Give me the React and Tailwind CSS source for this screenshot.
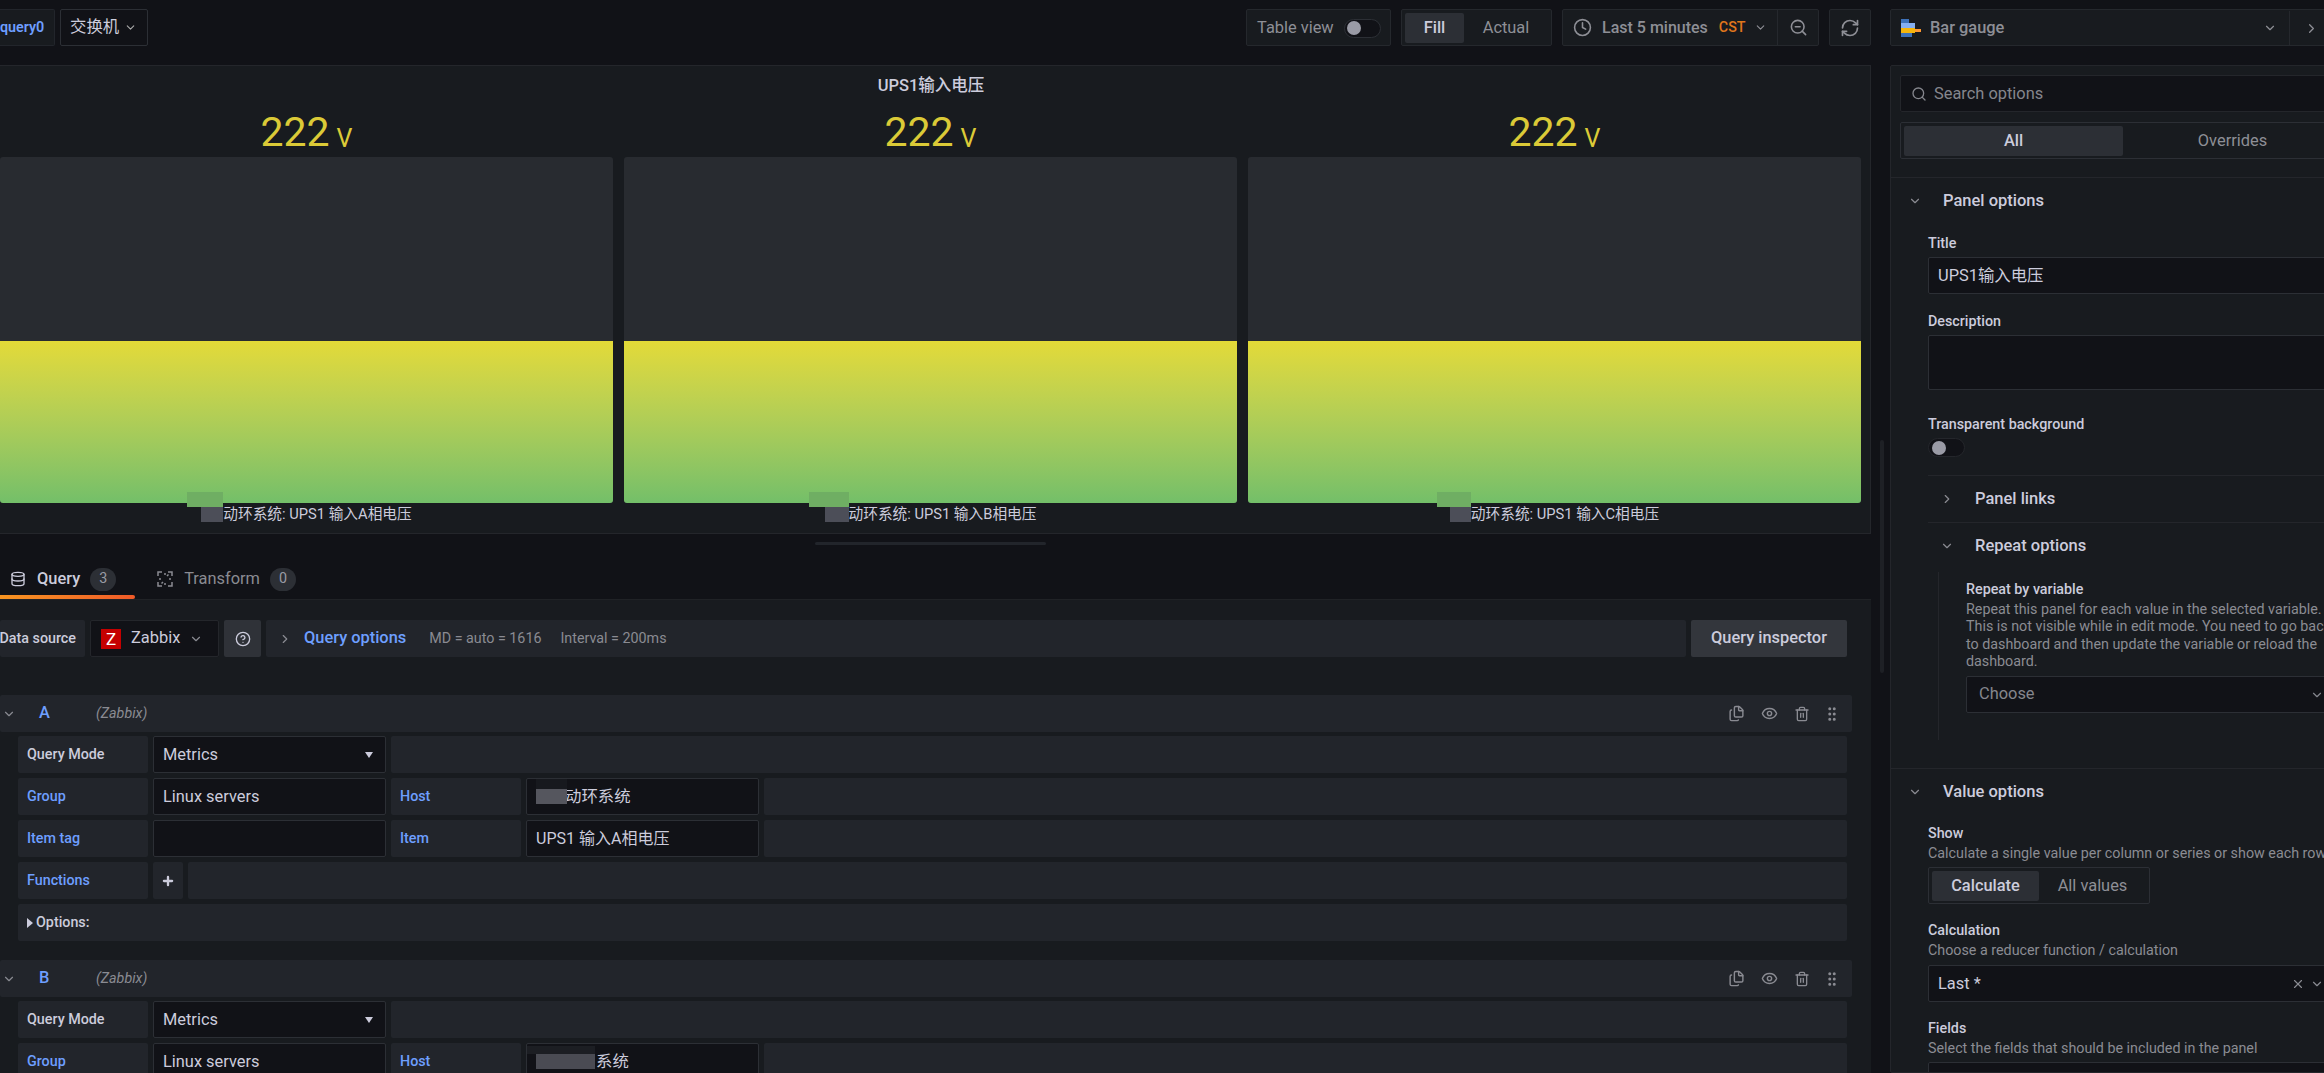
import React from "react";
import {
  ChevronDown,
  ChevronRight,
  CircleHelp,
  Clock,
  Database,
  Eye,
  Files,
  GripVertical,
  Plus,
  RefreshCw,
  Search,
  Trash2,
  X,
  ZoomOut,
} from "lucide-react";

const bars = [
  { name: "A", blockWidth: "w-[22px]", topWidth: "w-[36px]" },
  { name: "B", blockWidth: "w-[24px]", topWidth: "w-[40px]" },
  { name: "C", blockWidth: "w-[21px]", topWidth: "w-[34px]" },
];

const BarGaugeIcon = () => (
  <svg width="20" height="19" viewBox="0 0 20 19" className="shrink-0">
    <rect x="0" y="0" width="8" height="4" fill="#3d71b8" />
    <rect x="0" y="4" width="14" height="5" fill="#84aff1" />
    <rect x="0" y="9" width="14" height="5" fill="#f5b50c" />
    <rect x="14" y="10" width="6" height="3" fill="#ff9830" />
    <rect x="0" y="14" width="11" height="4" fill="#3d71b8" />
  </svg>
);

const TransformIcon = () => (
  <svg width="16" height="16" viewBox="0 0 16 16" fill="none" stroke="#8a8b92" strokeWidth="1.5" className="shrink-0">
    <path d="M1 5V1h4M11 1h4v4M15 11v4h-4M5 15H1v-4" />
    <path d="M7 3h2M3 7v2M13 7v2M7 13h2" />
    <path d="M10 5l1.5-1.5M6 11l-1.5 1.5" />
  </svg>
);

const Caret = () => (
  <svg width="8" height="6" viewBox="0 0 8 6" className="shrink-0">
    <polygon points="0,0 8,0 4,6" fill="#ccccdc" />
  </svg>
);

const GaugeColumn = ({ bar }) => (
  <div className="flex-1 min-w-0 flex flex-col">
    <div className="h-[62px] flex items-end justify-center pb-[6px] text-[#dbca37] leading-none">
      <span className="text-[41px] leading-[38px]">222</span>
      <span className="text-[25px] leading-[24px] ml-[7px]">V</span>
    </div>
    <div className="h-[346px] rounded-[3px] bg-[#282b30] flex flex-col justify-end overflow-hidden">
      <div className="h-[162px] bg-gradient-to-b from-[#e3da37] to-[#73bf69]" />
    </div>
    <div className="h-[22px] flex items-center justify-center text-[14.7px] text-[#ccccdc]">
      <span className={`relative inline-block h-[15px] bg-[#4c4e58] ${bar.blockWidth}`}>
        <span className={`absolute right-0 bottom-full h-[15px] bg-[#6fae63] ${bar.topWidth}`} />
      </span>
      <span>动环系统: UPS1 输入{bar.name}相电压</span>
    </div>
  </div>
);

const Cell = ({ children, className = "" }) => (
  <div className={`h-[37px] rounded-[2px] bg-[#22252b] flex items-center shrink-0 ${className}`}>{children}</div>
);

const RowLabel = ({ children, blue = true }) => (
  <Cell className="w-[130px] pl-[9px]">
    <span className={`text-[14.3px] font-medium ${blue ? "text-[#6e9fff]" : "text-[#ccccdc]"}`}>{children}</span>
  </Cell>
);

const RowInput = ({ children, caret }) => (
  <div className="w-[233px] h-[37px] shrink-0 rounded-[2px] bg-[#111217] border border-[#2c2f35] flex items-center justify-between pl-[9px] pr-[12px] pt-[1px] text-[16.4px] text-[#ccccdc] overflow-hidden">
    <span className="flex items-center">{children}</span>
    {caret && <Caret />}
  </div>
);

const Filler = () => <Cell className="flex-1 min-w-0" />;

const QueryHeader = ({ letter }) => (
  <div className="h-[37px] w-[1852px] bg-[#22252b] rounded-[2px] flex items-center text-[#8a8b92]">
    <ChevronDown size={14} className="ml-[2px]" />
    <span className="w-[27px] ml-[23px] text-[#6e9fff] text-[16.4px] font-medium">{letter}</span>
    <span className="ml-[30px] text-[14.3px] italic">(Zabbix)</span>
    <div className="ml-auto flex items-center gap-[16px] pr-[11px]">
      <Files size={17} />
      <Eye size={17} />
      <Trash2 size={16} />
      <GripVertical size={18} className="ml-[-3px]" />
    </div>
  </div>
);

const QueryBlock = ({ letter, host }) => (
  <div className="flex flex-col">
    <QueryHeader letter={letter} />
    <div className="pl-[18px] pr-[24px] pt-[4px] flex flex-col gap-[5px]">
      <div className="flex gap-[5px]">
        <RowLabel blue={false}>Query Mode</RowLabel>
        <RowInput caret>Metrics</RowInput>
        <Filler />
      </div>
      <div className="flex gap-[5px]">
        <RowLabel>Group</RowLabel>
        <RowInput>Linux servers</RowInput>
        <RowLabel>Host</RowLabel>
        <RowInput>{host}</RowInput>
        <Filler />
      </div>
      <div className="flex gap-[5px]">
        <RowLabel>Item tag</RowLabel>
        <RowInput />
        <RowLabel>Item</RowLabel>
        <RowInput>
          <span className="text-[16px]">UPS1 输入{letter}相电压</span>
        </RowInput>
        <Filler />
      </div>
      <div className="flex gap-[5px]">
        <RowLabel>Functions</RowLabel>
        <Cell className="w-[30px] justify-center">
          <Plus size={14} strokeWidth={4} className="text-[#ccccdc]" />
        </Cell>
        <Filler />
      </div>
      <Cell className="w-full pl-[9px] gap-[3px]">
        <svg width="6" height="10" viewBox="0 0 6 10">
          <polygon points="0,0 6,5 0,10" fill="#ccccdc" />
        </svg>
        <span className="text-[14.3px] font-medium text-[#ccccdc]">Options:</span>
      </Cell>
    </div>
  </div>
);

const HostA = () => (
  <>
    <span className="relative inline-block w-[31px] h-[15px] mr-[-2px] bg-[#55565e]">
      <span className="absolute right-0 bottom-full w-[31px] h-[13px] bg-[#17191e]" />
    </span>
    <span>动环系统</span>
  </>
);

const HostB = () => (
  <>
    <span className="relative inline-block w-[59px] h-[15px] mr-[1px] bg-[#4a4b53]">
      <span className="absolute right-0 bottom-full w-[77px] h-[8px] bg-[#1c1e23]" />
    </span>
    <span>系统</span>
  </>
);

const Field = ({ label, desc, className = "", children }) => (
  <div className={className}>
    <div className="h-[17px] leading-[17px] text-[14.3px] font-medium text-[#ccccdc]">{label}</div>
    {desc && <div className="mt-[3px] leading-[17.4px] text-[14.3px] text-[#8b8c93] whitespace-nowrap">{desc}</div>}
    <div className="mt-[5px]">{children}</div>
  </div>
);

const SelectBox = ({ children, className = "" }) => (
  <div className={`h-[37px] rounded-[2px] bg-[#111217] border border-[#2c2f35] flex items-center pt-[1px] text-[16.4px] ${className}`}>
    {children}
  </div>
);

const SectionHeader = ({ title, open, nested }) => {
  const Icon = open ? ChevronDown : ChevronRight;
  return (
    <div className="h-[46px] flex items-center text-[#ccccdc]">
      <Icon size={14} className={`text-[#8a8b92] ${nested ? "ml-[12px]" : "ml-[17px]"}`} />
      <span className="text-[16.5px] font-medium ml-[21px]">{title}</span>
    </div>
  );
};

const App = () => {
  return (
    <div className="h-screen w-full overflow-hidden flex bg-[#111217] text-[#ccccdc] font-['Roboto','Noto_Sans_CJK_SC',sans-serif]">
      {/* left: preview and queries */}
      <div className="w-[1871px] shrink-0 flex flex-col">
        <div className="h-[65px] shrink-0 pt-[9px] flex items-start">
          <div className="h-[37px] w-[55px] rounded-r-[2px] bg-[#181b1f] border border-[#22252b] border-l-0 flex items-center text-[14.3px] font-semibold text-[#6e9fff]">
            query0
          </div>
          <div className="h-[37px] w-[88px] ml-[5px] rounded-[2px] border border-[#2c2f35] flex items-center pl-[9px] gap-[5px] text-[16.4px]">
            交换机
            <ChevronDown size={13} className="text-[#aaa]" />
          </div>
          <div className="ml-auto flex gap-[10px]">
            <div className="h-[37px] w-[145px] rounded-[2px] bg-[#181b1f] border border-[#25282d] flex items-center pl-[10px] pt-[1px] text-[16.4px] text-[#8e8f96]">
              Table view
              <span className="ml-[10px] w-[37px] h-[19px] rounded-full border border-[#2c2f35] bg-[#111217] flex items-center pl-[2px]">
                <span className="w-[14px] h-[14px] rounded-full bg-[#9a9ba6]" />
              </span>
            </div>
            <div className="h-[37px] w-[151px] rounded-[2px] bg-[#181b1f] border border-[#25282d] flex items-center p-[3px] text-[16.4px]">
              <span className="h-[30px] w-[59px] rounded-[2px] bg-[#2c2f35] flex items-center justify-center pt-[1px] font-medium">Fill</span>
              <span className="flex-1 text-center pt-[1px] text-[#8e8f96]">Actual</span>
            </div>
            <div className="h-[37px] w-[257px] rounded-[2px] bg-[#181b1f] border border-[#25282d] flex items-center text-[16px] font-medium text-[#8e8f96]">
              <Clock size={19} className="ml-[10px]" />
              <span className="ml-[10px] pt-[1px]">Last 5 minutes</span>
              <span className="ml-[11px] pt-[1px] text-[14.3px] font-medium text-[#e0761c]">CST</span>
              <ChevronDown size={13} className="ml-[8px]" />
              <span className="ml-auto h-full w-[41px] border-l border-[#25282d] flex items-center justify-center">
                <ZoomOut size={19} />
              </span>
            </div>
            <div className="h-[37px] w-[42px] rounded-[2px] bg-[#181b1f] border border-[#25282d] flex items-center justify-center text-[#8e8f96]">
              <RefreshCw size={20} />
            </div>
          </div>
        </div>

        {/* bar gauge panel */}
        <div className="h-[469px] shrink-0 bg-[#181b1f] border-t border-b border-r border-[#24262b] flex flex-col">
          <div className="h-[29px] pt-[9px] pr-[8px] text-center text-[16.5px] font-medium leading-[22px]">UPS1输入电压</div>
          <div className="flex gap-[11px] pr-[9px]">
            {bars.map((bar) => (
              <GaugeColumn key={bar.name} bar={bar} />
            ))}
          </div>
        </div>

        {/* tabs */}
        <div className="h-[66px] shrink-0 flex flex-col border-b border-[#202226]">
          <div className="mt-[8px] ml-[815px] w-[231px] h-[3px] rounded-full bg-[#22252b]" />
          <div className="mt-auto flex items-center h-[40px] relative">
            <Database size={16} className="ml-[10px] text-[#ccccdc]" />
            <span className="ml-[11px] text-[16.4px] font-medium">Query</span>
            <span className="ml-[10px] w-[26px] h-[23px] rounded-full bg-[#2c2f35] text-[14.3px] text-[#9a9ba4] flex items-center justify-center">3</span>
            <span className="ml-[41px]"><TransformIcon /></span>
            <span className="ml-[11px] text-[16.4px] text-[#8a8b92]">Transform</span>
            <span className="ml-[10px] w-[26px] h-[23px] rounded-full bg-[#2c2f35] text-[14.3px] text-[#9a9ba4] flex items-center justify-center">0</span>
            <div className="absolute left-0 bottom-0 w-[135px] h-[4px] rounded-r-[2px] bg-gradient-to-r from-[#f79420] to-[#f05a28]" />
          </div>
        </div>

        {/* queries */}
        <div className="flex-1 min-h-0 bg-[#181b1f] overflow-hidden pt-[20px]">
          <div className="flex items-center gap-[5px] pr-[24px]">
            <Cell className="w-[85px] justify-end pr-[9px] text-[14.3px] font-medium whitespace-nowrap overflow-hidden">Data source</Cell>
            <div className="w-[129px] h-[37px] shrink-0 rounded-[2px] bg-[#111217] border border-[#24262b] flex items-center text-[16.4px] text-[#ccccdc]">
              <span className="ml-[10px] w-[20px] h-[20px] bg-[#c50000] text-white text-[17px] leading-[20px] text-center">Z</span>
              <span className="ml-[10px]">Zabbix</span>
              <ChevronDown size={14} className="ml-[9px] text-[#8a8b92]" />
            </div>
            <div className="w-[37px] h-[37px] shrink-0 rounded-[2px] bg-[#2f3238] flex items-center justify-center">
              <CircleHelp size={16} />
            </div>
            <Cell className="flex-1 min-w-0 text-[14.3px] text-[#8a8b92]">
              <ChevronRight size={14} className="ml-[12px]" />
              <span className="ml-[12px] text-[16.4px] font-medium text-[#6e9fff]">Query options</span>
              <span className="ml-[23px]">MD = auto = 1616</span>
              <span className="ml-[19px]">Interval = 200ms</span>
            </Cell>
            <div className="w-[156px] h-[37px] shrink-0 rounded-[2px] bg-[#33363c] flex items-center justify-center text-[16.4px] font-medium">
              Query inspector
            </div>
          </div>
          <div className="mt-[38px] flex flex-col gap-[19px]">
            <QueryBlock letter="A" host={<HostA />} />
            <QueryBlock letter="B" host={<HostB />} />
          </div>
        </div>
      </div>

      {/* scrollbar */}
      <div className="w-[19px] shrink-0 relative">
        <div className="absolute left-[9px] top-[440px] w-[4px] h-[233px] rounded-full bg-[#1e2025]" />
      </div>

      {/* right: options */}
      <div className="flex-1 min-w-0 overflow-hidden">
        <div className="w-[470px] flex flex-col h-full">
          <div className="h-[65px] shrink-0 pt-[9px]">
            <div className="h-[37px] rounded-[2px] bg-[#181b1f] border border-[#25282d] flex items-center pt-[1px] text-[16.4px] font-medium text-[#8e8f96]">
              <span className="ml-[10px]"><BarGaugeIcon /></span>
              <span className="ml-[9px]">Bar gauge</span>
              <ChevronDown size={14} className="ml-auto mr-[12px]" />
              <span className="h-full w-[70px] border-l border-[#25282d] flex items-center pl-[14px]">
                <ChevronRight size={15} />
              </span>
            </div>
          </div>
          <div className="flex-1 min-h-0 rounded-[2px] bg-[#181b1f] border border-[#24262b] overflow-hidden">
            <div className="h-[112px] px-[9px] pt-[9px] border-b border-[#24262b]">
              <div className="h-[37px] rounded-[2px] bg-[#111217] border border-[#24262b] flex items-center pl-[10px] pt-[1px] text-[16.4px] text-[#85868d]">
                <Search size={16} />
                <span className="ml-[7px]">Search options</span>
              </div>
              <div className="mt-[10px] h-[37px] rounded-[2px] border border-[#2c2f35] flex items-center p-[3px] text-[16.4px]">
                <span className="h-[30px] w-[219px] rounded-[2px] bg-[#2c2f35] flex items-center justify-center pt-[1px] font-medium">All</span>
                <span className="w-[219px] text-center pt-[1px] text-[#8e8f96]">Overrides</span>
              </div>
            </div>

            <SectionHeader title="Panel options" open />
            <div className="pl-[37px] pt-[11px]">
              <Field label="Title">
                <SelectBox className="pl-[9px]">UPS1输入电压</SelectBox>
              </Field>
              <Field label="Description" className="mt-[19px]">
                <div className="h-[55px] rounded-[2px] bg-[#111217] border border-[#2c2f35]" />
              </Field>
              <Field label="Transparent background" className="mt-[26px]">
                <div className="w-[37px] h-[19px] rounded-full border border-[#24262b] bg-[#111217] flex items-center pl-[3px]">
                  <span className="w-[14px] h-[14px] rounded-full bg-[#9a9ba6]" />
                </div>
              </Field>
              <div className="mt-[18px] border-t border-[#24262b]">
                <SectionHeader title="Panel links" nested />
              </div>
              <div className="border-t border-[#24262b]">
                <SectionHeader title="Repeat options" open nested />
              </div>
              <div className="ml-[10px] mt-[3px] h-[168px] border-l border-[#24262b] pl-[27px] pt-[9px]">
                <Field
                  label="Repeat by variable"
                  desc={
                    <>
                      Repeat this panel for each value in the selected variable.
                      <br />
                      This is not visible while in edit mode. You need to go back
                      <br />
                      to dashboard and then update the variable or reload the
                      <br />
                      dashboard.
                    </>
                  }
                >
                  <SelectBox className="pl-[12px] text-[#85868d] w-[362px] justify-between pr-[3px]">
                    Choose
                    <ChevronDown size={14} />
                  </SelectBox>
                </Field>
              </div>
            </div>

            <div className="mt-[28px] border-t border-[#24262b]">
              <SectionHeader title="Value options" open />
              <div className="pl-[37px] pt-[10px]">
                <Field label="Show" desc="Calculate a single value per column or series or show each row">
                  <div className="w-[222px] h-[37px] rounded-[2px] border border-[#2c2f35] flex items-center p-[3px] text-[16.4px]">
                    <span className="h-[30px] w-[107px] rounded-[2px] bg-[#2c2f35] flex items-center justify-center font-medium">Calculate</span>
                    <span className="flex-1 text-center text-[#8e8f96]">All values</span>
                  </div>
                </Field>
                <Field label="Calculation" desc="Choose a reducer function / calculation" className="mt-[18px]">
                  <SelectBox className="pl-[9px] w-[400px] pr-[3px]">
                    Last *
                    <X size={14} className="ml-auto text-[#8a8b92]" />
                    <ChevronDown size={14} className="ml-[5px] text-[#8a8b92]" />
                  </SelectBox>
                </Field>
                <Field label="Fields" desc="Select the fields that should be included in the panel" className="mt-[18px]">
                  <SelectBox className="w-[400px]" />
                </Field>
              </div>
            </div>
          </div>
        </div>
      </div>
    </div>
  );
};

export default App;
